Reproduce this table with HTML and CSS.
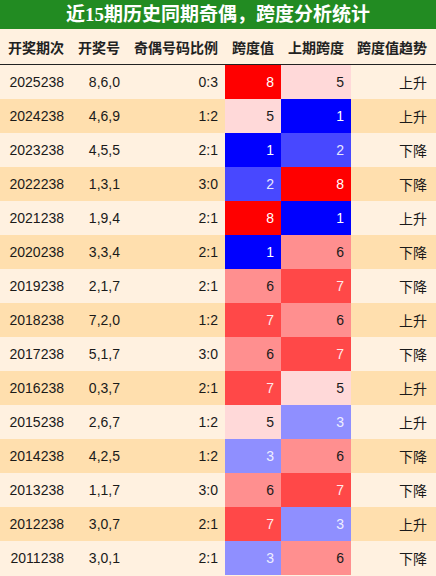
FILE: index.html
```html
<!DOCTYPE html>
<html lang="zh-CN">
<head>
    <meta charset="UTF-8">
    <meta name="viewport" content="width=device-width, initial-scale=1.0">
    <title>近15期历史同期奇偶，跨度分析统计</title>
    <link rel="stylesheet" href="styles.css">
</head>
<body>
    <div class="titulo">近15期历史同期奇偶，跨度分析统计</div>
    <table class="tabela">
        <colgroup>
            <col class="c-qi">
            <col class="c-hao">
            <col class="c-bili">
            <col class="c-kua">
            <col class="c-shang">
            <col class="c-qushi">
        </colgroup>
        <thead>
            <tr>
                <th>开奖期次</th>
                <th>开奖号</th>
                <th>奇偶号码比例</th>
                <th>跨度值</th>
                <th>上期跨度</th>
                <th class="qushi">跨度值趋势</th>
            </tr>
        </thead>
        <tbody>
            <tr><td>2025238</td><td>8,6,0</td><td>0:3</td><td class="k8">8</td><td class="k5">5</td><td class="qushi">上升</td></tr>
            <tr><td>2024238</td><td>4,6,9</td><td>1:2</td><td class="k5">5</td><td class="k1">1</td><td class="qushi">上升</td></tr>
            <tr><td>2023238</td><td>4,5,5</td><td>2:1</td><td class="k1">1</td><td class="k2">2</td><td class="qushi">下降</td></tr>
            <tr><td>2022238</td><td>1,3,1</td><td>3:0</td><td class="k2">2</td><td class="k8">8</td><td class="qushi">下降</td></tr>
            <tr><td>2021238</td><td>1,9,4</td><td>2:1</td><td class="k8">8</td><td class="k1">1</td><td class="qushi">上升</td></tr>
            <tr><td>2020238</td><td>3,3,4</td><td>2:1</td><td class="k1">1</td><td class="k6">6</td><td class="qushi">下降</td></tr>
            <tr><td>2019238</td><td>2,1,7</td><td>2:1</td><td class="k6">6</td><td class="k7">7</td><td class="qushi">下降</td></tr>
            <tr><td>2018238</td><td>7,2,0</td><td>1:2</td><td class="k7">7</td><td class="k6">6</td><td class="qushi">上升</td></tr>
            <tr><td>2017238</td><td>5,1,7</td><td>3:0</td><td class="k6">6</td><td class="k7">7</td><td class="qushi">下降</td></tr>
            <tr><td>2016238</td><td>0,3,7</td><td>2:1</td><td class="k7">7</td><td class="k5">5</td><td class="qushi">上升</td></tr>
            <tr><td>2015238</td><td>2,6,7</td><td>1:2</td><td class="k5">5</td><td class="k3">3</td><td class="qushi">上升</td></tr>
            <tr><td>2014238</td><td>4,2,5</td><td>1:2</td><td class="k3">3</td><td class="k6">6</td><td class="qushi">下降</td></tr>
            <tr><td>2013238</td><td>1,1,7</td><td>3:0</td><td class="k6">6</td><td class="k7">7</td><td class="qushi">下降</td></tr>
            <tr><td>2012238</td><td>3,0,7</td><td>2:1</td><td class="k7">7</td><td class="k3">3</td><td class="qushi">上升</td></tr>
            <tr><td>2011238</td><td>3,0,1</td><td>2:1</td><td class="k3">3</td><td class="k6">6</td><td class="qushi">下降</td></tr>
        </tbody>
    </table>
</body>
</html>
```

FILE: styles.css
```css
body {
    margin: 0;
    background-color: #fff1e0;
    font-family: 'Liberation Sans', 'Noto Sans CJK SC', sans-serif;
    color: #1a1a1a;
}

.titulo {
    background-color: #228b22;
    color: #ffffff;
    font-family: 'Liberation Serif', 'Noto Sans CJK SC', serif;
    font-weight: bold;
    font-size: 19px;
    height: 29px;
    line-height: 29px;
    text-align: center;
}

.tabela {
    width: 436px;
    border-collapse: collapse;
    table-layout: fixed;
}

/* larguras das colunas */
.c-qi { width: 71px; }
.c-hao { width: 56px; }
.c-bili { width: 98px; }
.c-kua { width: 56px; }
.c-shang { width: 70px; }
.c-qushi { width: 85px; }

th, td {
    padding: 0 7px 0 0;
    text-align: right;
    white-space: nowrap;
    font-size: 14px;
}

th {
    height: 35px;
    font-weight: bold;
    color: #222;
    border-bottom: 1px solid #222;
    background-color: #fff1e0;
}

td {
    height: 34px;
}

th.qushi, td.qushi {
    padding-right: 9px;
}

tbody tr:nth-child(even) td {
    background-color: #ffdfae;
}

/* cores do mapa de calor */
tbody tr td.k8 { background-color: #ff0000; color: #ffffff; }
tbody tr td.k7 { background-color: #ff4848; color: #ffe8e8; }
tbody tr td.k6 { background-color: #ff8f8f; color: #1a1a1a; }
tbody tr td.k5 { background-color: #ffd9d9; color: #1a1a1a; }
tbody tr td.k3 { background-color: #8f8fff; color: #eeeeff; }
tbody tr td.k2 { background-color: #4848ff; color: #e8e8ff; }
tbody tr td.k1 { background-color: #0000ff; color: #ffffff; }
```
